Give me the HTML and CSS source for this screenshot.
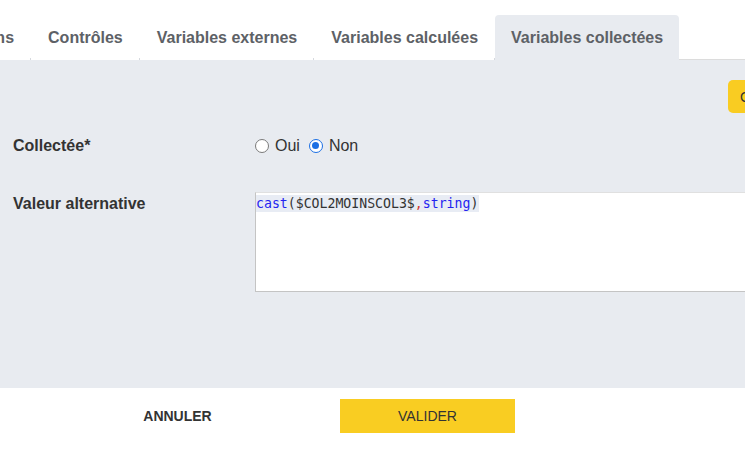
FILE: index.html
```html
<!DOCTYPE html>
<html lang="fr">
<head>
<meta charset="utf-8">
<title>Variables collectées</title>
<link rel="stylesheet" href="styles.css">
</head>
<body>
<div class="page">
  <nav class="tabs">
    <div class="tab first">Déclarations</div>
    <div class="tab">Contrôles</div>
    <div class="tab">Variables externes</div>
    <div class="tab">Variables calculées</div>
    <div class="tab active">Variables collectées</div>
    <div class="tab-fill"></div>
  </nav>
  <section class="panel">
    <div class="toolbar">
      <button class="btn-gen">Générer les variables collectées</button>
    </div>
    <div class="form">
      <div class="label">Collectée*</div>
      <div class="radios">
        <label class="radio"><input type="radio" name="coll"> Oui</label>
        <label class="radio"><input type="radio" name="coll" checked> Non</label>
      </div>
      <div class="label label-alt">Valeur alternative</div>
      <div class="editor">
        <div class="code-line"><span class="kw">cast</span>($COL2MOINSCOL3$<span class="sep">,</span><span class="kw">string</span>)</div>
      </div>
    </div>
  </section>
  <footer class="footer">
    <button class="btn-cancel">ANNULER</button>
    <button class="btn-validate">VALIDER</button>
  </footer>
</div>
</body>
</html>
```

FILE: styles.css
```css
* { box-sizing: border-box; }
html, body {
  margin: 0;
  padding: 0;
  background: #fff;
  font-family: "Liberation Sans", Arial, sans-serif;
  overflow: hidden;
}
.page {
  width: 745px;
  height: 465px;
  overflow: hidden;
}
.tabs {
  display: flex;
  align-items: flex-end;
  margin-top: 15px;
  height: 45px;
  margin-left: -99px;
  white-space: nowrap;
}
.tab {
  position: relative;
  height: 45px;
  padding: 14px 17px 0 17px;
  font-size: 16px;
  font-weight: bold;
  color: #5d6166;
  line-height: 18px;
}
.tab::after {
  content: "";
  position: absolute;
  right: 0;
  bottom: 0;
  width: 1px;
  height: 2px;
  background: #d6d9de;
}
.tab.active {
  background: #e8ebf0;
  border-radius: 4px 4px 0 0;
  padding-left: 16px;
  padding-right: 16px;
}
.tab.active::after { display: none; }
.tab-fill {
  flex: 1;
  height: 45px;
  border-bottom: 1px solid #dcdcdc;
}
.panel {
  background: #e8ebf0;
  height: 328px;
  padding-top: 20px;
}
.toolbar {
  display: flex;
  justify-content: flex-start;
  padding-left: 728px;
  height: 33px;
  white-space: nowrap;
}
.btn-gen {
  height: 33px;
  border: none;
  border-radius: 5px;
  background: #f9cc22;
  color: #333;
  font-family: "Liberation Sans", Arial, sans-serif;
  font-size: 14px;
  padding: 0 12px;
  white-space: nowrap;
}
.form {
  display: grid;
  grid-template-columns: 242px 600px;
  padding-left: 13px;
  padding-top: 20px;
  row-gap: 34px;
}
.label {
  font-size: 16px;
  font-weight: bold;
  color: #333;
  line-height: 26px;
}
.label-alt {
  line-height: 22px;
}
.radios {
  display: flex;
  align-items: center;
  gap: 9px;
  height: 26px;
  font-size: 16px;
  color: #333;
}
.radio {
  display: flex;
  align-items: center;
  gap: 6px;
}
.radio input {
  appearance: none;
  -webkit-appearance: none;
  margin: 0;
  width: 14px;
  height: 14px;
  border: 1.5px solid #7a7a7a;
  border-radius: 50%;
  background: #fff;
  position: relative;
}
.radio input:checked {
  border: 1.5px solid #1b6fe4;
}
.radio input:checked::after {
  content: "";
  position: absolute;
  left: 2px;
  top: 2px;
  width: 7px;
  height: 7px;
  border-radius: 50%;
  background: #1b6fe4;
}
.editor {
  height: 100px;
  background: #fff;
  border-top: 1px solid #e0e0e0;
  border-left: 1px solid #c4c4c4;
  border-bottom: 1px solid #c4c4c4;
  margin-top: -1px;
  padding-top: 1px;
}
.code-line {
  display: inline-block;
  background: #e8ecf4;
  font-family: "DejaVu Sans Mono", monospace;
  font-size: 13.2px;
  line-height: 17px;
  color: #333;
  padding-right: 1px;
}
.kw { color: #2424f0; }
.sep { color: #d43a2f; }
.footer {
  display: flex;
  height: 60px;
  padding-top: 11px;
  align-items: flex-start;
}
.btn-cancel {
  width: 340px;
  height: 34px;
  padding-left: 15px;
  padding-right: 0;
  border: none;
  background: transparent;
  font-family: "Liberation Sans", Arial, sans-serif;
  font-weight: bold;
  font-size: 14px;
  color: #333;
  text-align: center;
}
.btn-validate {
  width: 175px;
  height: 34px;
  border: none;
  background: #f9cd22;
  font-family: "Liberation Sans", Arial, sans-serif;
  font-size: 14px;
  color: #333;
}
```
